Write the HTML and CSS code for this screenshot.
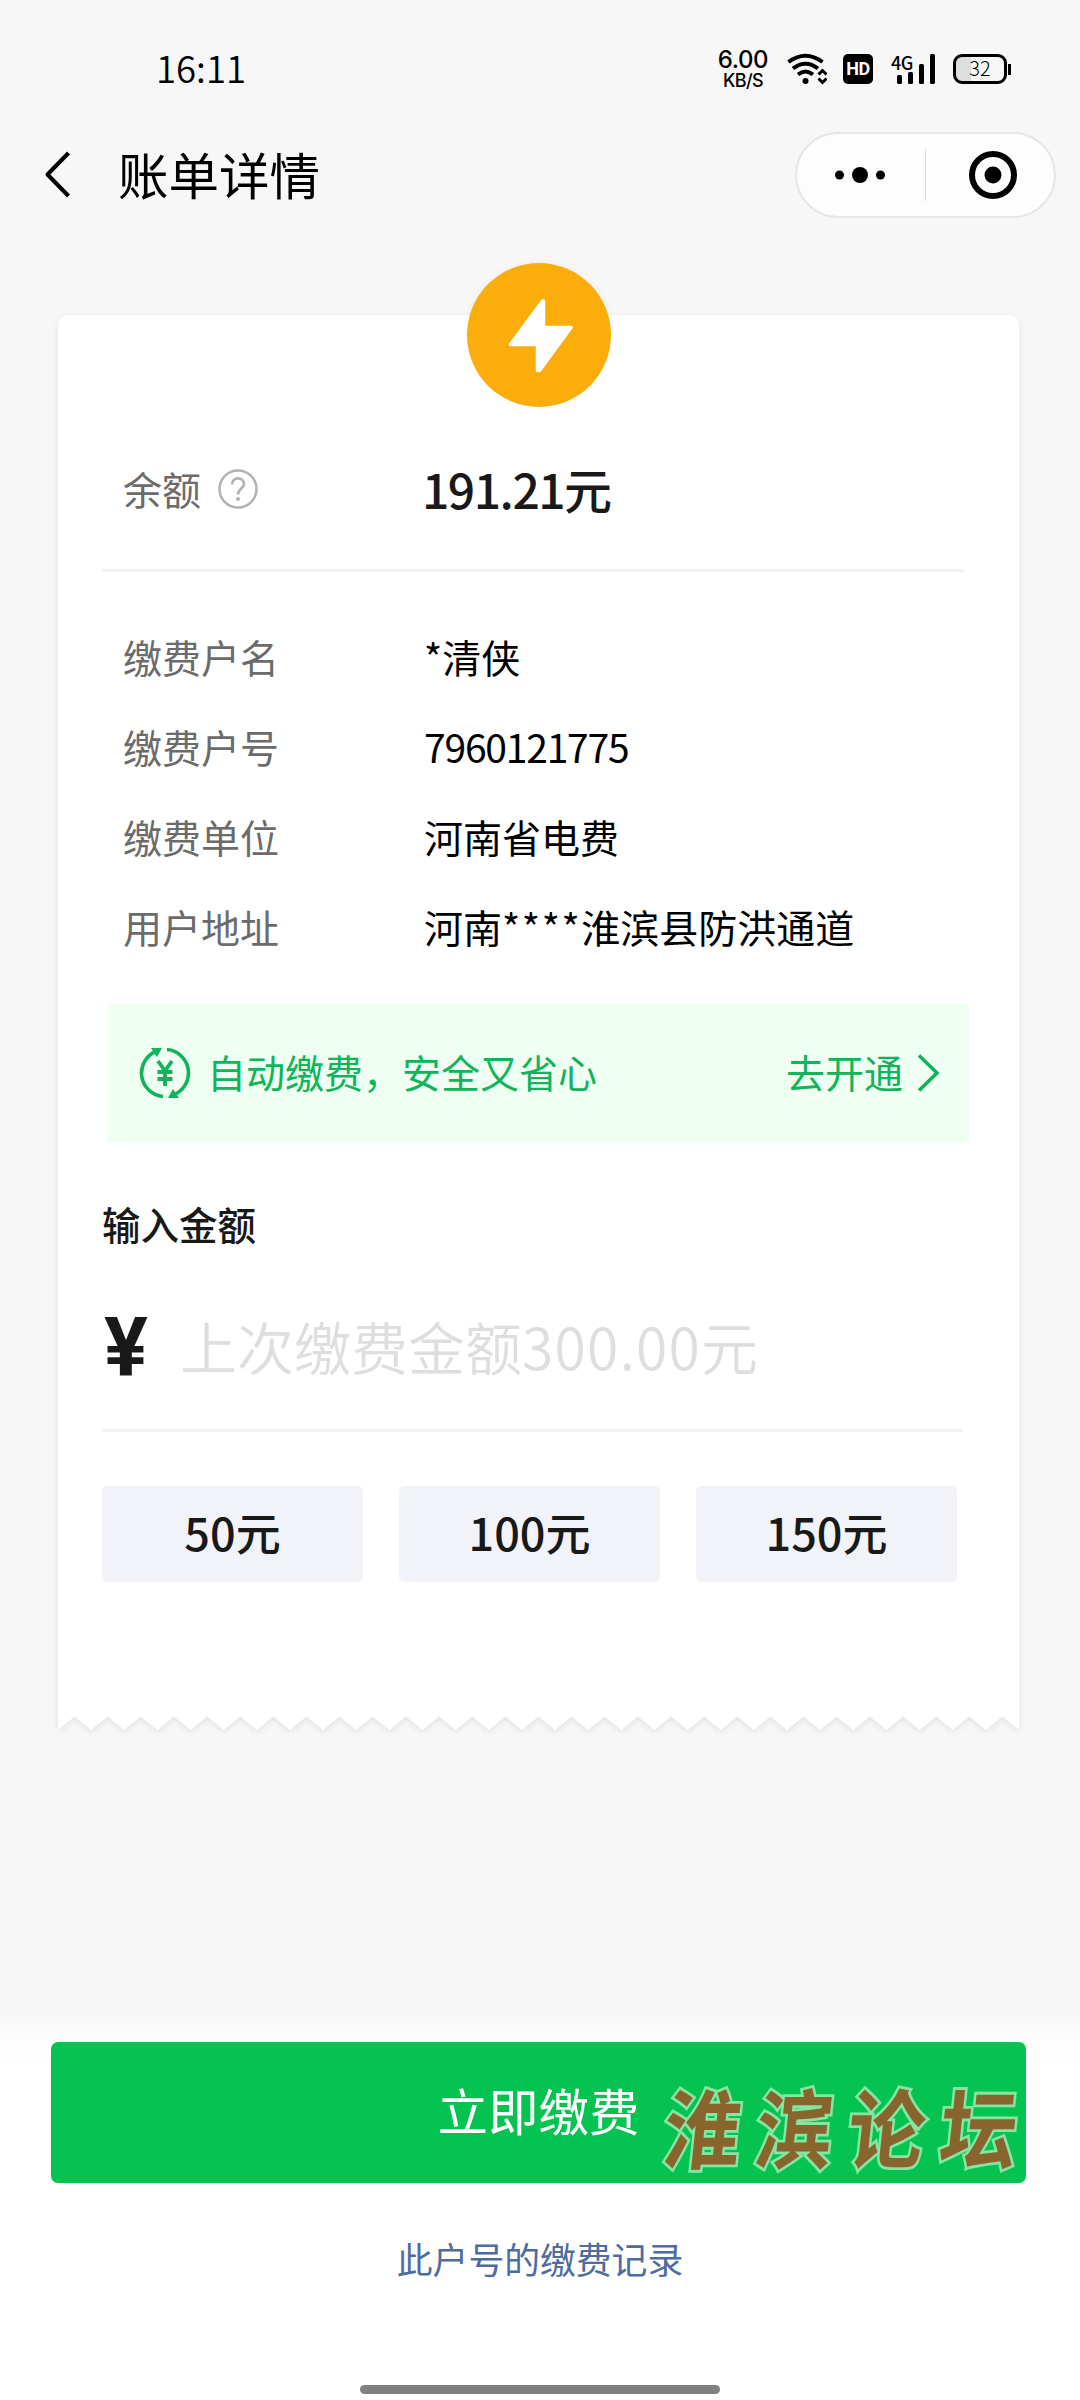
FILE: index.html
```html
<!DOCTYPE html>
<html lang="zh-CN">
<head>
<meta charset="utf-8">
<title>账单详情</title>
<link rel="stylesheet" href="styles.css">
</head>
<body>
<div class="page">
  <header class="status">
    <span class="time">16:11</span>
    <div class="status-right">
      <div class="speed"><span class="speed-num">6.00</span><span class="speed-unit">KB/S</span></div>
      <svg class="wifi" width="40" height="32" viewBox="0 0 40 32" fill="none" stroke="#000" stroke-width="4">
        <path d="M1.5 9Q18.500 -3.500 35.500 9"/><path d="M6 15.500Q18.500 6 31 15.500"/><path d="M11 21.500Q18.500 15.500 26 21.500"/>
        <circle cx="18.500" cy="28" r="3" fill="#000" stroke="none"/>
        <path d="M31.500 21.500l4-4 4 4M31.500 25.500l4 4 4-4" stroke-width="3"/>
      </svg>
      <span class="hd">HD</span>
      <div class="signal">
        <span class="net">4G</span>
        <svg width="40" height="30" viewBox="0 0 40 30"><rect x="0" y="21" width="5" height="9" rx="1.500"/><rect x="11" y="18" width="5" height="12" rx="1.500"/><rect x="22" y="10" width="5" height="20" rx="1.500"/><rect x="33" y="0" width="5" height="30" rx="1.500"/></svg>
      </div>
      <div class="battery"><span class="battery-box">32</span><span class="nub"></span></div>
    </div>
  </header>

  <nav class="nav">
    <svg class="back" width="28" height="48" viewBox="0 0 28 48" fill="none" stroke="#000" stroke-width="4" stroke-linejoin="round"><path d="M24.500 2L3.500 23.500 24.500 45"/></svg>
    <h1 class="title">账单详情</h1>
    <div class="capsule">
      <svg class="more" width="50" height="16" viewBox="0 0 50 16"><circle cx="4.500" cy="8" r="4.500"/><circle cx="25" cy="8" r="8"/><circle cx="45.500" cy="8" r="4.500"/></svg>
      <span class="split"></span>
      <svg class="target" width="48" height="48" viewBox="0 0 48 48"><circle cx="24" cy="24" r="21" fill="none" stroke="#000" stroke-width="6"/><circle cx="24" cy="24" r="8.500"/></svg>
    </div>
  </nav>

  <main class="card">
    <svg class="badge" width="144" height="144" viewBox="0 0 144 144">
      <circle cx="72" cy="72" r="72" fill="#fbad0c"/>
      <path d="M75.500 38L43.500 81.500H70.500V107.500H72.500L104 64.500H76.500V38Z" fill="#fff" stroke="#fff" stroke-width="3.500" stroke-linejoin="round"/>
    </svg>
    <div class="body">
      <div class="balance">
        <span class="label">余额</span>
        <svg class="help" width="40" height="40" viewBox="0 0 40 40" fill="none" stroke="#b2b2b2" stroke-width="2.500"><circle cx="20" cy="20" r="18.500"/><path d="M14 15.500C14 7.500 26 7.500 26 15C26 19.500 20 19.500 20 25.500" stroke-width="2.700"/><circle cx="20" cy="30" r="2" fill="#b2b2b2" stroke="none"/></svg>
        <strong class="amount"><span class="amount-num">191.21</span>元</strong>
      </div>
      <dl class="rows">
        <dt>缴费户名</dt><dd>*清侠</dd>
        <dt>缴费户号</dt><dd class="number">7960121775</dd>
        <dt>缴费单位</dt><dd>河南省电费</dd>
        <dt>用户地址</dt><dd>河南<span class="stars">****</span>淮滨县防洪通道</dd>
      </dl>
      <div class="auto">
        <svg class="auto-icon" width="52" height="54" viewBox="0 0 52 54" fill="none" stroke="#10b45a" stroke-width="3.600">
          <path d="M18 5A23.500 23.500 0 0 0 24 50.500"/><path d="M28 3.500A23.500 23.500 0 0 1 34 49"/>
          <path d="M12 2H23L18 11ZM40 52H29L34 43Z" fill="#10b45a" stroke="none"/>
          <path d="M19 15L26 25 33 15M26 25V40M18.500 26H33.500M18.500 33H33.500" stroke-width="3.800"/>
        </svg>
        <span class="auto-text">自动缴费，安全又省心</span>
        <span class="auto-go">去开通</span>
        <svg class="arrow" width="24" height="38" viewBox="0 0 24 38" fill="none" stroke="#10b45a" stroke-width="3.600"><path d="M2 1.500L20 19 2 36.500"/></svg>
      </div>
      <h2 class="subtitle">输入金额</h2>
      <div class="input"><span class="yen">¥</span><span class="placeholder">上次缴费金额<span class="placeholder-num">300.00</span>元</span></div>
      <div class="choices"><span class="choice">50元</span><span class="choice">100元</span><span class="choice">150元</span></div>
    </div>
    <svg class="teeth" width="961" height="16" viewBox="0 0 960 16" preserveAspectRatio="none" fill="#fff">
      <defs><pattern id="tooth" width="33.1035" height="16" patternUnits="userSpaceOnUse"><path d="M0 0H33.1035V14L16.550 0.500 0 14Z"/></pattern></defs>
      <rect width="960" height="16" fill="url(#tooth)"/>
    </svg>
  </main>

  <footer class="footer">
    <div class="pay">立即缴费
      <div class="mark"><span>淮</span><span>滨</span><span>论</span><span>坛</span></div>
    </div>
    <a class="history">此户号的缴费记录</a>
    <div class="home"></div>
  </footer>
</div>
</body>
</html>
```
FILE: styles.css
```css
* { box-sizing: border-box; margin: 0; padding: 0; }
body { font-family: "Noto Sans CJK SC", sans-serif; background: #f7f7f7; color: #000; }
svg { display: block; flex: none; }
.page { width: 1080px; height: 2400px; display: flex; flex-direction: column; overflow: hidden; background: #f7f7f7; }

.status { height: 120px; padding: 50px 69px 0 156px; display: flex; justify-content: space-between; align-items: flex-start; }
.time { font-size: 36.500px; line-height: 38px; margin-top: -1px; font-weight: 350; }
.status-right { display: flex; align-items: flex-start; height: 40px; }
.speed { width: 52px; display: flex; flex-direction: column; align-items: center; margin-right: 18px; font-weight: 500; }
.speed-num { font: 500 24px/20px Inter, sans-serif; letter-spacing: -0.4px; }
.speed-unit { font: 500 18px/18px Inter, sans-serif; letter-spacing: -0.6px; margin-top: 2px; }
.wifi { margin-top: 3px; margin-right: 16px; }
.hd { width: 30px; height: 30px; margin-top: 4px; margin-right: 18px; background: #000; color: #fff; border-radius: 5px; font: 700 18px/30px Roboto, sans-serif; letter-spacing: -0.5px; text-align: center; }
.signal { width: 45px; height: 30px; margin-top: 4px; margin-right: 17px; position: relative; padding-left: 6px; }
.net { position: absolute; left: 0; top: -1px; font-size: 18px; line-height: 18px; font-weight: 500; letter-spacing: -0.6px; }
.battery { display: flex; align-items: center; gap: 1px; margin-top: 4px; }
.battery-box { width: 54px; height: 30px; border: 3px solid #000; border-radius: 9px; background: linear-gradient(90deg, #dedede 15px, transparent 15px); font-size: 20px; line-height: 22px; font-weight: 300; text-align: center; }
.nub { width: 3px; height: 11px; background: #000; }

.nav { height: 110px; padding: 12px 24px 0 44px; display: flex; align-items: flex-start; }
.back { margin: 19px 46px 0 0; }
.title { font-size: 50.5px; line-height: 80px; font-weight: 400; margin-top: 1px; }
.capsule { margin-left: auto; width: 261px; height: 86px; border: 2px solid #e6e6e6; border-radius: 43px; background: #fdfdfd; display: flex; align-items: center; padding-left: 38px; }
.split { width: 1px; height: 52px; margin-left: 40px; background: #dcdcdc; }
.target { margin-left: 43px; }

.card { width: 961px; margin: 85px 0 0 58px; position: relative; filter: drop-shadow(0 2px 3px rgba(0,0,0,.09)); }
.badge { position: absolute; left: 409px; top: -52px; }
.body { height: 1401px; padding: 134px 55px 0 44px; background: #fff; border-radius: 10px 10px 0 0; }
.balance { height: 123px; padding: 0 0 43px 21px; display: flex; align-items: center; border-bottom: 3px solid #f2f2f2; margin-bottom: 39px; }
.label { font-size: 39px; line-height: 80px; color: #6b6b6b; width: 95px; }
.help { margin-top: 3px; }
.amount { margin-left: 164px; font-size: 48px; line-height: 80px; font-weight: 500; color: #191919; }
.amount-num { letter-spacing: -1.500px; }
.rows { display: grid; grid-template-columns: 301px 1fr; grid-auto-rows: 90px; padding-left: 21px; font-size: 39px; line-height: 90px; white-space: nowrap; }
.rows dt { color: #6b6b6b; }
.number { letter-spacing: -1.200px; }
.stars { letter-spacing: 1.600px; }
.auto { width: 862px; height: 138px; margin: 33px 0 51px 5px; padding: 0 28px 0 32px; background: #effff2; display: flex; align-items: center; color: #10b45a; font-size: 39px; }
.auto-text { margin-left: 16px; line-height: 80px; margin-top: -5px; white-space: nowrap; }
.auto-go { margin-left: auto; line-height: 80px; margin-top: -5px; }
.arrow { margin-left: 14px; }
.subtitle { font-size: 38.500px; line-height: 60px; font-weight: 500; color: #191919; margin-bottom: 42px; }
.input { width: 861px; height: 137px; border-bottom: 3px solid #f2f2f2; display: flex; line-height: 100px; margin-bottom: 54px; }
.yen { width: 78px; font: 700 82px/105px Roboto, sans-serif; color: #191919; padding-left: 2px; }
.placeholder { font-size: 57px; color: #dedede; font-weight: 350; white-space: nowrap; }
.placeholder-num { letter-spacing: 1.200px; }
.choices { display: flex; gap: 36px; }
.choice { width: 261px; height: 96px; border-radius: 5px; background: #f2f3f8; text-align: center; font-size: 45px; line-height: 92px; font-weight: 500; color: #191919; }

.footer { flex: none; margin-top: 280px; height: 388px; padding-top: 30px; display: flex; flex-direction: column; align-items: center; background: linear-gradient(#f7f7f7, #fdfdfd 26px, #fff 60px); }
.pay { position: relative; width: 975px; height: 141px; margin-right: 3px; border-radius: 7px; background: #04c350; color: #fff; font-size: 50.500px; line-height: 134px; text-align: center; }
.mark { position: absolute; left: 614px; top: 35px; display: flex; gap: 15px; font-size: 77px; line-height: 96px; font-weight: 700; color: #87652c; -webkit-text-stroke: 5px #86e5a3; paint-order: stroke fill; transform: skewX(-6deg) scaleY(1.12); }
.mark span { width: 77px; }
.history { margin-top: 45px; font-size: 35.800px; line-height: 60px; color: #4e6c9f; }
.home { width: 360px; height: 9px; margin-top: 97px; border-radius: 5px; background: #808080; }
```
